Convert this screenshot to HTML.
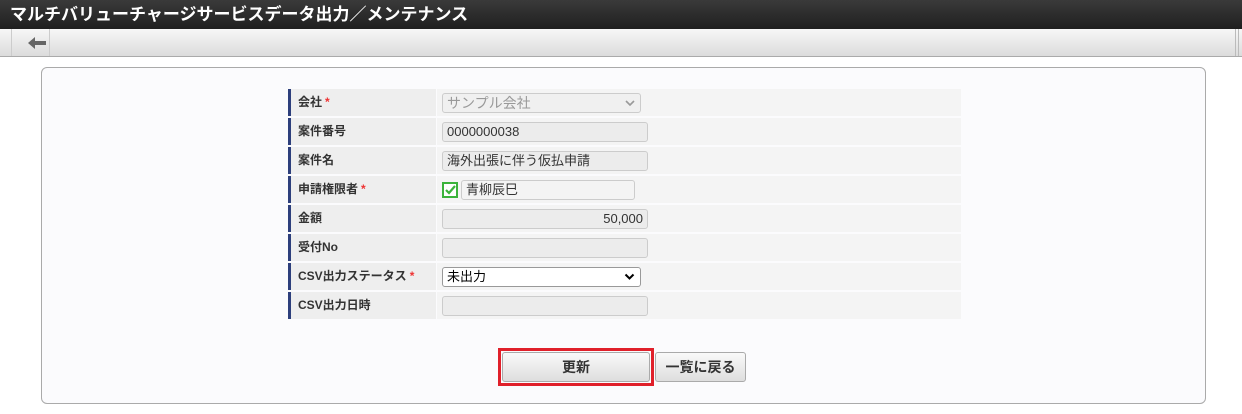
<!DOCTYPE html>
<html><head><meta charset="utf-8"><style>
*{box-sizing:border-box;margin:0;padding:0}
body{width:1242px;height:414px;background:#fff;font-family:"Liberation Sans","Noto Sans CJK JP",sans-serif;position:relative;overflow:hidden;font-size:13px;color:#333}
.title{position:absolute;left:0;top:0;width:1242px;height:29px;background:linear-gradient(#3a3a3a,#1f1f1f);color:#fff;font-weight:bold;font-size:17px;line-height:29px;padding-left:10px}
.tool{position:absolute;left:0;top:29px;width:1242px;height:28px;background:linear-gradient(#f7f7f7,#dcdcdc);border-bottom:1px solid #aaa}
.back{position:absolute;left:11px;top:0;width:39px;height:27px;border-left:1px solid #ccc;border-right:1px solid #ccc}
.vr{position:absolute;left:1235px;top:0;width:4px;height:27px;border-left:1px solid #bbb;border-right:1px solid #bbb}
.panel{position:absolute;left:41px;top:67px;width:1165px;height:337px;background:#fbfbfd;border:1px solid #aaa;border-radius:6px}
.lab{position:absolute;left:287px;width:148px;height:27px;background:#eeeeee;border-left:3px solid #2d3f7c;margin-left:1px;padding-left:7px;font-weight:bold;font-size:12px;line-height:26px;color:#333}
.val{position:absolute;left:437px;width:524px;height:27px;background:#f4f4f4}
.req{color:#e33;margin-left:3px}
.in{position:absolute;left:442px;width:206px;height:20px;background:#ececec;border:1px solid #ccc;border-radius:3px;font-size:13px;line-height:18px;padding:0 4px;color:#333}
.btn{position:absolute;top:352px;height:30px;background:linear-gradient(#fafafa,#dedede);border:1px solid #aaa;border-radius:3px;font-size:14px;font-weight:bold;text-align:center;line-height:28px;color:#333}
svg.ch{position:absolute;right:5px;top:5px}
</style></head><body>
<div class="title">マルチバリューチャージサービスデータ出力／メンテナンス</div>
<div class="tool"><div class="back"><svg width="39" height="27"><path d="M23 12h11v4H23v4l-7-6 7-6z" fill="#666"/></svg></div><div class="vr"></div></div>
<div class="panel"></div>

<div class="lab" style="top:89px">会社<span class="req">*</span></div><div class="val" style="top:89px"></div>
<div class="in" style="top:93px;width:199px;background:#f0f0f0;color:#999;font-size:14px">サンプル会社<svg class="ch" width="10" height="8"><path d="M1 2l4 4 4-4" stroke="#999" stroke-width="1.6" fill="none"/></svg></div>

<div class="lab" style="top:118px">案件番号</div><div class="val" style="top:118px"></div>
<div class="in" style="top:122px">0000000038</div>

<div class="lab" style="top:147px">案件名</div><div class="val" style="top:147px"></div>
<div class="in" style="top:151px">海外出張に伴う仮払申請</div>

<div class="lab" style="top:176px">申請権限者<span class="req">*</span></div><div class="val" style="top:176px"></div>
<div style="position:absolute;left:442px;top:182px;width:16px;height:16px;border:2px solid #3bb33b;background:#fff"><svg width="12" height="12" style="position:absolute;left:0;top:0"><path d="M2 6l3 3 6-7" stroke="#3bb33b" stroke-width="2.2" fill="none"/></svg></div>
<div class="in" style="top:180px;left:461px;width:174px;background:#f4f4f4">青柳辰巳</div>

<div class="lab" style="top:205px">金額</div><div class="val" style="top:205px"></div>
<div class="in" style="top:209px;text-align:right">50,000</div>

<div class="lab" style="top:234px">受付No</div><div class="val" style="top:234px"></div>
<div class="in" style="top:238px"></div>

<div class="lab" style="top:263px">CSV出力ステータス<span class="req">*</span></div><div class="val" style="top:263px"></div>
<div class="in" style="top:267px;width:199px;background:#fff;border-color:#999;color:#000">未出力<svg class="ch" width="11" height="8"><path d="M1.5 1.5l4 4 4-4" stroke="#000" stroke-width="2" fill="none"/></svg></div>

<div class="lab" style="top:292px">CSV出力日時</div><div class="val" style="top:292px"></div>
<div class="in" style="top:296px"></div>

<div style="position:absolute;left:498px;top:348px;width:156px;height:38px;border:3px solid #e0202a"></div>
<div class="btn" style="left:502px;width:148px">更新</div>
<div class="btn" style="left:655px;width:91px">一覧に戻る</div>
</body></html>
